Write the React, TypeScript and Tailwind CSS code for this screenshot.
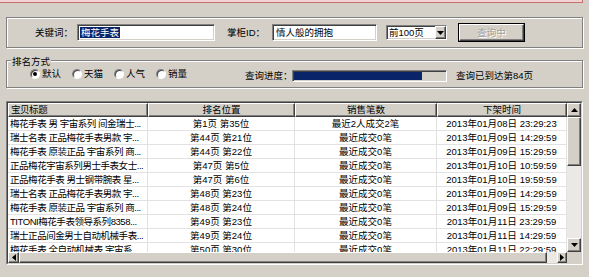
const sunken =
  "border border-t-[#808080] border-l-[#808080] border-b-white border-r-white shadow-[inset_1px_1px_0_#404040,inset_-1px_-1px_0_#d4d0c8]";
const raised =
  "border border-t-white border-l-white border-b-[#404040] border-r-[#404040] shadow-[inset_-1px_-1px_0_#808080] bg-[#d4d0c8]";
const etched = "border border-[#808080] shadow-[inset_1px_1px_0_#fff,1px_1px_0_#fff]";

const rows = [
  ["梅花手表 男 宇宙系列 间金瑞士...", "第1页 第35位", "最近2人成交2笔", "2013年01月08日 23:29:23"],
  ["瑞士名表 正品梅花手表男款 宇...", "第44页 第21位", "最近成交0笔", "2013年01月09日 14:29:59"],
  ["梅花手表 原装正品 宇宙系列 商...", "第44页 第22位", "最近成交0笔", "2013年01月09日 15:29:59"],
  ["正品梅花宇宙系列男士手表女士...", "第47页 第5位", "最近成交0笔", "2013年01月10日 10:59:59"],
  ["正品梅花手表 男士钢带腕表 星...", "第47页 第6位", "最近成交0笔", "2013年01月10日 19:59:59"],
  ["瑞士名表 正品梅花手表男款 宇...", "第48页 第23位", "最近成交0笔", "2013年01月09日 14:29:59"],
  ["梅花手表 原装正品 宇宙系列 商...", "第48页 第24位", "最近成交0笔", "2013年01月09日 15:29:59"],
  ["TITONI梅花手表领导系列8358...", "第49页 第23位", "最近成交0笔", "2013年01月11日 23:29:59"],
  ["瑞士正品间金男士自动机械手表...", "第49页 第24位", "最近成交0笔", "2013年01月11日 14:29:59"],
  ["梅花手表 全自动机械表 宇宙系...", "第50页 第30位", "最近成交0笔", "2013年01月11日 22:29:59"],
];

const cols = [
  { title: "宝贝标题", w: "w-[140px]", align: "justify-start pl-[2px] tracking-[-0.45px]" },
  { title: "排名位置", w: "w-[147px]", align: "justify-center" },
  { title: "销售笔数", w: "w-[142px]", align: "justify-center" },
  { title: "下架时间", w: "w-[130px]", align: "justify-center" },
];

function Arrow({ dir }: { dir: "up" | "down" | "left" | "right" }) {
  const pts = {
    up: "0,4 7,4 3.5,0",
    down: "0,0 7,0 3.5,4",
    left: "4,0 4,7 0,3.5",
    right: "0,0 0,7 4,3.5",
  }[dir];
  const vert = dir === "up" || dir === "down";
  return (
    <svg width={vert ? 7 : 4} height={vert ? 4 : 7} viewBox={vert ? "0 0 7 4" : "0 0 4 7"}>
      <polygon points={pts} fill="#000" />
    </svg>
  );
}

function Radio({ label, checked }: { label: string; checked?: boolean }) {
  return (
    <div className="w-[42px] shrink-0 flex items-center gap-[2px]">
      <div className="w-[10px] h-[10px] rounded-full bg-white border border-t-[#808080] border-l-[#808080] border-b-white border-r-white shadow-[inset_1px_1px_0_#404040] flex items-center justify-center">
        {checked && <div className="w-[4px] h-[4px] rounded-full bg-black" />}
      </div>
      <span>{label}</span>
    </div>
  );
}

export default function App() {
  return (
    <div className="w-[589px] h-[277px] overflow-hidden whitespace-nowrap bg-[#d4d0c8] text-[9.5px] leading-none text-black font-['Liberation_Sans','Noto_Sans_CJK_SC',sans-serif]">
      <div className="h-[3px] w-[583px] bg-[#efd2d2] border-b border-r border-[#cc6f6f]" />

      {/* 查询条件 */}
      <div className={`mt-[14px] ml-[6px] w-[577px] h-[31px] flex items-center ${etched}`}>
        <span className="w-[66px] shrink-0 text-right">关键词：</span>
        <div className={`ml-[4px] w-[138px] h-[17px] shrink-0 bg-white flex items-center pl-[2px] ${sunken}`}>
          <span className="bg-[#0a246a] text-white px-[1px] py-[1px]">梅花手表</span>
        </div>
        <span className="ml-[12px] w-[45px] shrink-0">掌柜ID：</span>
        <div className={`w-[105px] h-[17px] shrink-0 bg-white flex items-center pl-[3px] ${sunken}`}>情人般的拥抱</div>
        <div className={`ml-[9px] w-[61px] h-[15px] shrink-0 bg-white flex items-center pl-[2px] ${sunken}`}>
          <span className="flex-1">前100页</span>
          <div className={`${raised} w-[11px] h-full flex items-center justify-center`}>
            <Arrow dir="down" />
          </div>
        </div>
        <div className="ml-[11px] w-[67px] h-[19px] shrink-0 border border-black">
          <div className={`${raised} w-full h-full flex items-center justify-center text-[#a3a09a] [text-shadow:1px_1px_0_#fff]`}>
            查询中
          </div>
        </div>
      </div>

      {/* 排名方式 */}
      <div className={`relative mt-[12px] ml-[6px] w-[577px] h-[28px] flex items-center ${etched}`}>
        <span className="absolute left-[4px] -top-[4px] bg-[#d4d0c8] px-[1px]">排名方式</span>
        <div className="ml-[23px] flex items-center shrink-0">
          <Radio label="默认" checked />
          <Radio label="天猫" />
          <Radio label="人气" />
          <Radio label="销量" />
        </div>
        <span className="ml-[47px] w-[47px] shrink-0 mt-[4px]">查询进度：</span>
        <div className={`mt-[4px] w-[155px] h-[12px] shrink-0 bg-[#d4d0c8] p-[1px] ${sunken}`}>
          <div className="w-[128px] h-full bg-[#0a246a]" />
        </div>
        <span className="ml-[9px] mt-[4px] shrink-0">查询已到达第84页</span>
      </div>

      {/* 结果列表 */}
      <div className="mt-[13px] ml-[6px] w-[577px] h-[164px] border border-t-[#808080] border-l-[#808080] border-b-white border-r-white">
        <div className="w-full h-full border border-t-[#404040] border-l-[#404040] border-b-[#d4d0c8] border-r-[#d4d0c8] bg-white flex flex-col">
          <div className="flex h-[149px]">
            <div className="w-[559px] flex flex-col">
              <div className="flex h-[14px]">
                {cols.map((c) => (
                  <div key={c.title} className={`${raised} ${c.w} shrink-0 h-full flex items-center ${c.align}`}>
                    {c.title}
                  </div>
                ))}
              </div>
              <div className="h-[135px] overflow-hidden">
                {rows.map((r, i) => (
                  <div key={i} className="flex h-[14px] border-b border-[#e2e2e2]">
                    {r.map((cell, j) => (
                      <div
                        key={j}
                        className={`${cols[j].w} shrink-0 h-full flex items-center overflow-hidden border-r border-[#e2e2e2] ${cols[j].align}`}
                      >
                        {cell}
                      </div>
                    ))}
                  </div>
                ))}
              </div>
            </div>
            <div className="w-[14px] h-full flex flex-col">
              <div className={`${raised} h-[14px] flex items-center justify-center`}>
                <Arrow dir="up" />
              </div>
              <div className={`${raised} h-[49px]`} />
              <div className="flex-1 bg-[#ebe9e5]" />
              <div className={`${raised} h-[14px] flex items-center justify-center`}>
                <Arrow dir="down" />
              </div>
            </div>
          </div>
          <div className="flex h-[11px]">
            <div className={`${raised} w-[11px] flex items-center justify-center`}>
              <Arrow dir="left" />
            </div>
            <div className={`${raised} w-[528px]`} />
            <div className="w-[10px] bg-[#ebe9e5]" />
            <div className={`${raised} w-[10px] flex items-center justify-center`}>
              <Arrow dir="right" />
            </div>
            <div className="w-[14px] bg-[#d4d0c8]" />
          </div>
        </div>
      </div>
    </div>
  );
}
